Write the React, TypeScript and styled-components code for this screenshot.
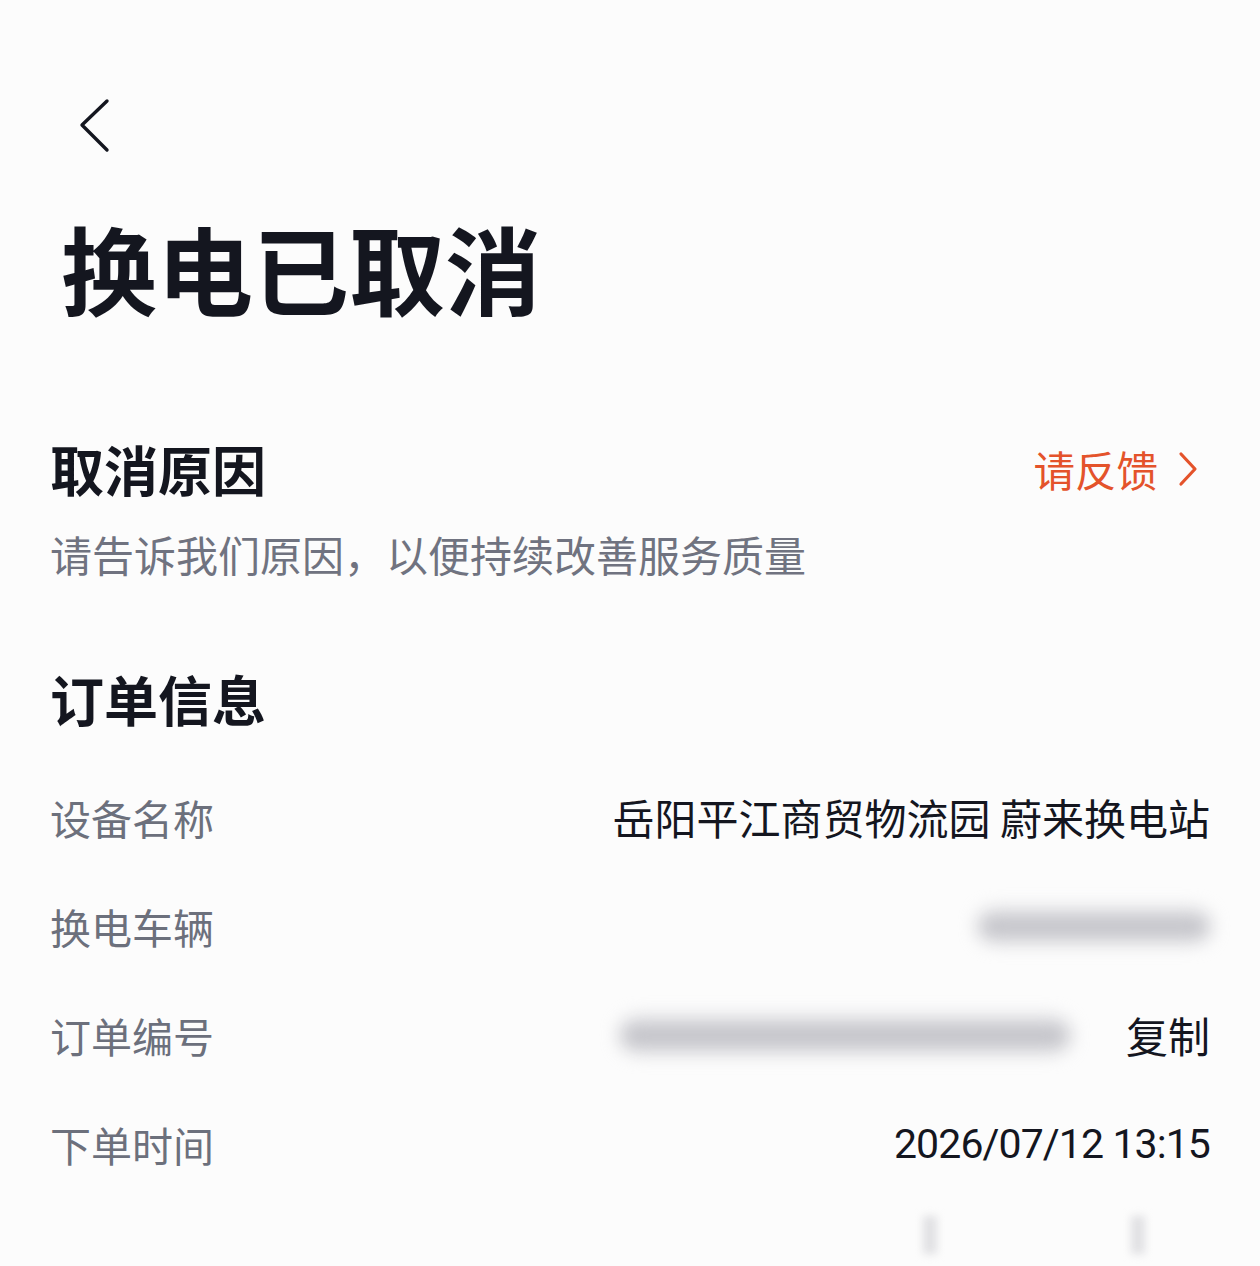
import React from "react";
import styled, { createGlobalStyle } from "styled-components";

const Global = createGlobalStyle`
  html, body {
    margin: 0;
    padding: 0;
    background: #fcfcfc;
  }
  body {
    font-family: "Noto Sans CJK SC", "Noto Sans", sans-serif;
    color: #14161f;
  }
`;

const Page = styled.div`
  width: 1260px;
  height: 1266px;
  box-sizing: border-box;
  padding: 98px 50px 0 50px;
  background: #fcfcfc;
  overflow: hidden;
`;

const BackButton = styled.button`
  display: flex;
  align-items: center;
  justify-content: center;
  width: 40px;
  height: 56px;
  margin-left: 24px;
  padding: 0;
  border: none;
  background: transparent;
  color: #14161f;
`;

const Title = styled.h1`
  margin: 58px 0 0 11px;
  font-size: 96px;
  line-height: 110px;
  font-weight: 700;
  letter-spacing: 0;
  color: #14161f;
`;

const Section = styled.section<{ $top: number }>`
  margin-top: ${(p) => p.$top}px;
`;

const SectionHead = styled.div`
  display: flex;
  align-items: center;
  justify-content: space-between;
`;

const SectionTitle = styled.h2`
  margin: 0;
  font-size: 54px;
  line-height: 64px;
  font-weight: 700;
  color: #14161f;
`;

const FeedbackLink = styled.a`
  display: flex;
  align-items: center;
  gap: 20px;
  margin-right: 12px;
  font-size: 41.5px;
  line-height: 56px;
  color: #e4532b;
  text-decoration: none;
`;

const Hint = styled.p`
  margin: 25px 0 0 0;
  font-size: 42px;
  line-height: 56px;
  color: #707380;
`;

const InfoList = styled.div`
  display: flex;
  flex-direction: column;
  margin-top: 31px;
`;

const InfoRow = styled.div`
  display: flex;
  align-items: center;
  justify-content: space-between;
  height: 109px;
`;

const Label = styled.span`
  font-size: 41px;
  line-height: 56px;
  color: #6c707c;
`;

const Value = styled.span`
  display: flex;
  align-items: center;
  font-size: 42px;
  line-height: 56px;
  color: #14161f;
`;

const TimeValue = styled(Value)`
  font-family: "Roboto", "Noto Sans", sans-serif;
  font-size: 41px;
  letter-spacing: -0.9px;
`;

const Masked = styled.span<{ $w: number; $h: number }>`
  display: inline-block;
  width: ${(p) => p.$w}px;
  height: ${(p) => p.$h}px;
  border-radius: 30px;
  background: linear-gradient(180deg, #dadade 0%, #bebec4 55%, #d8d8dc 100%);
  filter: blur(9px);
`;

const CopyButton = styled.span`
  margin-left: 56px;
  color: #14161f;
`;

const Smudge = styled.div`
  display: flex;
  justify-content: flex-end;
  align-items: center;
  gap: 194px;
  margin-top: 18px;
  padding-right: 65px;
`;

const SmudgeMark = styled.span`
  width: 14px;
  height: 38px;
  background: #e0e0e3;
  filter: blur(4px);
`;

const ChevronLeft = () => (
  <svg width="34" height="56" viewBox="0 0 34 56" fill="none">
    <path d="M30 3 L5 27 L30 52" stroke="currentColor" strokeWidth="3.4" strokeLinecap="round" strokeLinejoin="round" />
  </svg>
);

const ChevronRight = () => (
  <svg width="20" height="36" viewBox="0 0 20 36" fill="none">
    <path d="M3 3 L17 18 L3 33" stroke="currentColor" strokeWidth="3.2" strokeLinecap="round" strokeLinejoin="round" />
  </svg>
);

export default function App() {
  return (
    <>
      <Global />
      <Page>
        <BackButton aria-label="返回">
          <ChevronLeft />
        </BackButton>
        <Title>换电已取消</Title>

        <Section $top={115}>
          <SectionHead>
            <SectionTitle>取消原因</SectionTitle>
            <FeedbackLink href="#">
              请反馈
              <ChevronRight />
            </FeedbackLink>
          </SectionHead>
          <Hint>请告诉我们原因，以便持续改善服务质量</Hint>
        </Section>

        <Section $top={85}>
          <SectionTitle>订单信息</SectionTitle>
          <InfoList>
            <InfoRow>
              <Label>设备名称</Label>
              <Value>岳阳平江商贸物流园 蔚来换电站</Value>
            </InfoRow>
            <InfoRow>
              <Label>换电车辆</Label>
              <Value>
                <Masked $w={232} $h={34} />
              </Value>
            </InfoRow>
            <InfoRow>
              <Label>订单编号</Label>
              <Value>
                <Masked $w={450} $h={36} />
                <CopyButton>复制</CopyButton>
              </Value>
            </InfoRow>
            <InfoRow>
              <Label>下单时间</Label>
              <TimeValue>2026/07/12 13:15</TimeValue>
            </InfoRow>
          </InfoList>
          <Smudge>
            <SmudgeMark />
            <SmudgeMark />
          </Smudge>
        </Section>
      </Page>
    </>
  );
}
